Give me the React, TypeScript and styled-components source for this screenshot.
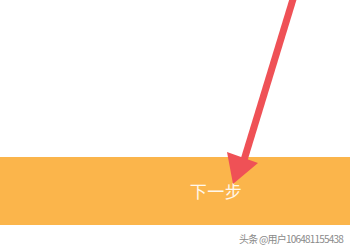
import React from "react";
import styled, { createGlobalStyle } from "styled-components";

const Global = createGlobalStyle`
  html, body { margin: 0; padding: 0; background: #ffffff; }
  body { font-family: "Noto Sans CJK SC", "Noto Sans", sans-serif; }
`;

const Page = styled.div`
  position: relative;
  width: 350px;
  height: 250px;
  display: flex;
  flex-direction: column;
  background: #ffffff;
  overflow: hidden;
`;

const Spacer = styled.div`
  height: 157px;
  flex: none;
`;

const Band = styled.div`
  height: 68px;
  flex: none;
  background: #fbb54b;
  display: flex;
  align-items: center;
  justify-content: center;
`;

const NextLabel = styled.span`
  color: #fff8ec;
  font-size: 17px;
  line-height: 1;
  letter-spacing: 0.5px;
  margin-left: 82px;
  margin-top: -2px;
`;

const Footer = styled.div`
  flex: 1;
  display: flex;
  align-items: center;
  justify-content: flex-end;
  padding-right: 7px;
  padding-top: 1px;
`;

const Watermark = styled.span`
  color: #8a8a8a;
  font-size: 10px;
  letter-spacing: -0.8px;
  font-family: "Noto Sans CJK SC", "Liberation Sans", sans-serif;
`;

const Overlay = styled.svg`
  position: absolute;
  left: 0;
  top: 0;
  pointer-events: none;
`;

export default function App() {
  return (
    <>
      <Global />
      <Page>
        <Spacer />
        <Band>
          <NextLabel>下一步</NextLabel>
        </Band>
        <Footer>
          <Watermark>头条 @用户106481155438</Watermark>
        </Footer>
        <Overlay width="350" height="250" viewBox="0 0 350 250">
          <line x1="294" y1="-4" x2="244" y2="160" stroke="#ef5156" strokeWidth="7" />
          <polygon points="227,152 258,163 233,184" fill="#ef5156" />
        </Overlay>
      </Page>
    </>
  );
}
